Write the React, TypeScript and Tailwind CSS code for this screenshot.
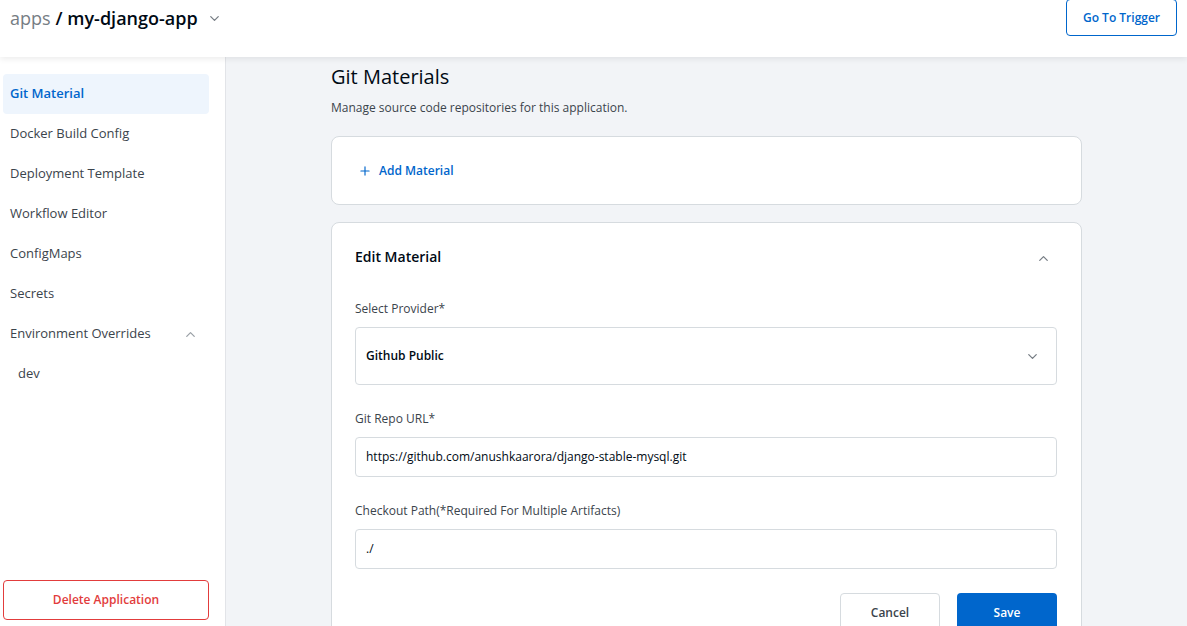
import { ChevronDown, ChevronUp, Plus } from "lucide-react";

const navItems = [
  "Git Material",
  "Docker Build Config",
  "Deployment Template",
  "Workflow Editor",
  "ConfigMaps",
  "Secrets",
];

export default function App() {
  return (
    <div
      className="w-[1187px] h-[626px] overflow-hidden flex flex-col bg-[#f2f4f7] text-[#000a14]"
      style={{ fontFamily: "'Open Sans', 'Noto Sans', sans-serif" }}
    >
      {/* Header */}
      <header className="relative z-10 h-[57px] shrink-0 bg-white flex items-start justify-between pl-[10px] pr-[10px] shadow-[0_2px_6px_rgba(0,0,0,0.08)]">
        <div className="flex items-center h-[36px] text-[18px] leading-none">
          <span className="text-[#767d84]">apps</span>
          <span className="ml-[5px] font-semibold text-[#000a14]">/ my-django-app</span>
          <ChevronDown className="ml-[9px] mt-[1px] w-[15px] h-[15px] text-[#767d84]" strokeWidth={2} />
        </div>
        <button className="h-[37px] -mt-[1px] w-[111px] rounded-[4px] border border-[#0066cc] bg-white text-[12px] font-semibold text-[#0066cc]">
          Go To Trigger
        </button>
      </header>

      <div className="flex flex-1 min-h-0">
        {/* Sidebar */}
        <aside className="w-[226px] shrink-0 bg-white border-r border-[#e2e4e8] flex flex-col pt-[17px] pl-[3px] pr-[16px] pb-[6px]">
          <nav className="flex flex-col">
            {navItems.map((item, i) => (
              <div
                key={item}
                className={
                  i === 0
                    ? "h-[40px] flex items-center px-[7px] rounded-[4px] bg-[#eef5fd] text-[13px] font-semibold text-[#0066cc]"
                    : "h-[40px] flex items-center px-[7px] text-[13px] text-[#3b444c]"
                }
              >
                {item}
              </div>
            ))}
            <div className="h-[40px] flex items-center justify-between px-[7px] text-[13px] text-[#3b444c]">
              <span>Environment Overrides</span>
              <ChevronUp className="w-[15px] h-[15px] text-[#9aa0a6] mr-[4px]" strokeWidth={2} />
            </div>
            <div className="h-[40px] flex items-center pl-[15px] text-[13px] text-[#3b444c]">dev</div>
          </nav>
          <button className="mt-auto h-[40px] w-[206px] rounded-[4px] border border-[#e23c3c] bg-white text-[12px] font-semibold text-[#e23c3c]">
            Delete Application
          </button>
        </aside>

        {/* Main */}
        <main className="flex-1 pl-[105px]">
          <div className="w-[751px] pt-[6px]">
            <h1 className="text-[20px] leading-[28px] text-[#000a14]">Git Materials</h1>
            <p className="mt-[8px] text-[12px] text-[#3b444c]">Manage source code repositories for this application.</p>

            <div className="mt-[19px] h-[69px] rounded-[8px] border border-[#d6dbdf] bg-white flex items-center pl-[26px]">
              <Plus className="w-[14px] h-[14px] text-[#0066cc]" strokeWidth={2} />
              <span className="ml-[7px] text-[12px] font-semibold text-[#0066cc]">Add Material</span>
            </div>

            <div className="mt-[17px] rounded-[8px] border border-[#d6dbdf] bg-white pl-[23px] pr-[24px] pt-[23px] pb-[20px]">
              <div className="flex items-center justify-between">
                <span className="text-[14px] font-semibold text-[#000a14]">Edit Material</span>
                <ChevronUp className="w-[15px] h-[15px] text-[#767d84] mr-[6px] mt-[4px]" strokeWidth={2} />
              </div>

              <label className="block mt-[33px] text-[12px] leading-[18px] text-[#3b444c]">Select Provider*</label>
              <div className="mt-[9px] h-[58px] rounded-[4px] border border-[#d6dbdf] flex items-center justify-between pl-[10px] pr-[16px]">
                <span className="text-[12px] font-semibold text-[#000a14]">Github Public</span>
                <ChevronDown className="w-[15px] h-[15px] text-[#767d84]" strokeWidth={2} />
              </div>

              <label className="block mt-[25px] text-[12px] leading-[18px] text-[#3b444c]">Git Repo URL*</label>
              <div className="mt-[9px] h-[40px] rounded-[4px] border border-[#d6dbdf] flex items-center pl-[10px] text-[12px] text-[#000a14]">
                https://github.com/anushkaarora/django-stable-mysql.git
              </div>

              <label className="block mt-[25px] text-[12px] leading-[18px] text-[#3b444c]">Checkout Path(*Required For Multiple Artifacts)</label>
              <div className="mt-[9px] h-[40px] rounded-[4px] border border-[#d6dbdf] flex items-center pl-[10px] text-[12px] text-[#000a14]">
                ./
              </div>

              <div className="mt-[24px] flex justify-end gap-[17px]">
                <button className="h-[40px] w-[100px] rounded-[4px] border border-[#d6dbdf] bg-white text-[12px] font-semibold text-[#3b444c]">
                  Cancel
                </button>
                <button className="h-[40px] w-[100px] rounded-[4px] bg-[#0066cc] text-[12px] font-semibold text-white">
                  Save
                </button>
              </div>
            </div>
          </div>
        </main>
      </div>
    </div>
  );
}
